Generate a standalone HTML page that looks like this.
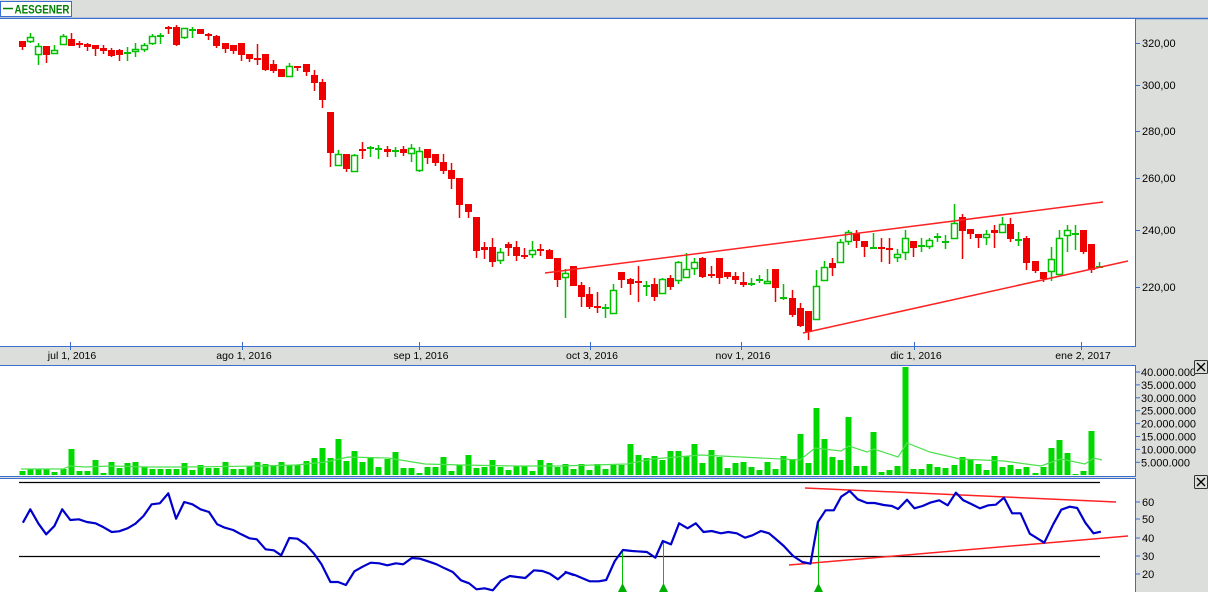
<!DOCTYPE html>
<html><head><meta charset="utf-8"><style>
html,body{margin:0;padding:0;width:1208px;height:592px;overflow:hidden;background:#dcdedc;}
svg{display:block;font-family:"Liberation Sans",sans-serif;}
</style></head><body>
<svg id="s" width="1208" height="592" xmlns="http://www.w3.org/2000/svg">
<rect width="1208" height="592" fill="#dcdedc"/>
<line x1="0" y1="18.5" x2="1208" y2="18.5" stroke="#3a6fd0" stroke-width="1.5"/>
<rect x="0.5" y="1.5" width="71" height="15" fill="#fff" stroke="#3a6fd0"/>
<line x1="3" y1="8.5" x2="13" y2="8.5" stroke="#008000" stroke-width="1.5"/>
<text x="14.5" y="13.5" font-size="12" font-weight="bold" fill="#008000" textLength="55" lengthAdjust="spacingAndGlyphs">AESGENER</text>
<rect x="0" y="19" width="1135" height="327" fill="#fff"/>
<line x1="1135.5" y1="19" x2="1135.5" y2="346" stroke="#3a6fd0"/>
<line x1="0" y1="346.5" x2="1136" y2="346.5" stroke="#3a6fd0"/>
<rect x="0" y="366" width="1135" height="110" fill="#fff"/>
<line x1="0" y1="365.5" x2="1136" y2="365.5" stroke="#3a6fd0"/>
<line x1="1135.5" y1="365" x2="1135.5" y2="477" stroke="#3a6fd0"/>
<line x1="0" y1="476.5" x2="1136" y2="476.5" stroke="#3a6fd0"/>
<rect x="0" y="479" width="1135" height="113" fill="#fff"/>
<line x1="0" y1="478.5" x2="1136" y2="478.5" stroke="#3a6fd0"/>
<line x1="1135.5" y1="478" x2="1135.5" y2="592" stroke="#3a6fd0"/>
<g id="g"></g>
</svg>
<script>
var NS="http://www.w3.org/2000/svg",G=document.getElementById("g");
function el(t,a,txt){var e=document.createElementNS(NS,t);for(var k in a)e.setAttribute(k,a[k]);if(txt)e.textContent=txt;G.appendChild(e);return e;}
function ln(x1,y1,x2,y2,c,w){el("line",{x1:x1,y1:y1,x2:x2,y2:y2,stroke:c,"stroke-width":w||1});}
[[43,"320,00"],[85,"300,00"],[131,"280,00"],[178,"260,00"],[230,"240,00"],[287,"220,00"]].forEach(function(a){ln(1135,a[0]+.5,1140,a[0]+.5,"#3a6fd0");el("text",{x:1142,y:a[0]+4,"font-size":"11"},a[1]);});
[[70,"jul 1, 2016"],[242,"ago 1, 2016"],[419,"sep 1, 2016"],[590,"oct 3, 2016"],[741,"nov 1, 2016"],[914,"dic 1, 2016"],[1081,"ene 2, 2017"]].forEach(function(a){ln(a[0]+.5,342,a[0]+.5,350,"#3a6fd0");el("text",{x:a[0]+2,y:359,"font-size":"10.5","text-anchor":"middle"},a[1]);});
var vl=["40.000.000","35.000.000","30.000.000","25.000.000","20.000.000","15.000.000","10.000.000","5.000.000"];
vl.forEach(function(t,i){var y=372+i*12.9;ln(1135,y,1140,y,"#3a6fd0");el("text",{x:1141,y:y+4,"font-size":"11"},t);});
[[502,"60"],[519,"50"],[538,"40"],[556,"30"],[574,"20"]].forEach(function(a){ln(1135,a[0],1140,a[0],"#3a6fd0");el("text",{x:1142,y:a[0]+4,"font-size":"11"},a[1]);});
[367,482].forEach(function(y){el("rect",{x:1194.5,y:y-6.5,width:13,height:13,fill:"#dcdedc",stroke:"#333",rx:1});ln(1197,y-4,1205,y+4,"#000",1.3);ln(1205,y-4,1197,y+4,"#000",1.3);});
var C=[[41,47,41,50,"r"],[37,42,33,43,"g"],[46,55,43,65,"g"],[46,55,46,63,"r"],[50,54,45,54,"g"],[36,45,34,45,"g"],[39,46,33,46,"r"],[43,45,41,48,"r"],[44,47,43,51,"r"],[45,49,45,56,"r"],[48,51,45,54,"r"],[50,56,48,57,"r"],[50,55,49,61,"r"],[52,54,47,61,"g"],[49,52,43,57,"g"],[45,50,43,52,"g"],[36,44,34,45,"g"],[35,36,33,44,"g"],[27,29,26,34,"r"],[27,45,25,46,"r"],[28,38,28,39,"g"],[29,30,27,38,"g"],[29,34,29,34,"r"],[34,36,33,40,"r"],[36,46,35,48,"r"],[43,49,43,53,"r"],[45,51,45,54,"r"],[43,55,43,61,"r"],[54,59,54,62,"r"],[58,60,44,65,"r"],[54,70,54,71,"r"],[64,71,60,73,"r"],[69,77,69,77,"r"],[66,77,63,77,"g"],[66,67,66,71,"r"],[64,72,64,76,"r"],[75,83,70,91,"r"],[82,100,79,108,"r"],[112,153,112,167,"r"],[154,166,150,166,"g"],[154,169,154,172,"r"],[155,172,154,172,"g"],
[149,151,142,159,"r"],[147,149,146,157,"g"],[148,149,145,159,"g"],[149,152,146,157,"r"],[150,151,147,157,"g"],[149,153,146,156,"r"],[148,154,144,162,"g"],[151,171,147,172,"g"],[149,158,149,164,"r"],[154,163,154,166,"r"],[162,171,154,174,"r"],[170,179,163,189,"r"],[178,205,178,218,"r"],[204,212,204,218,"r"],[217,251,217,258,"r"],[247,250,242,259,"r"],[247,262,238,267,"r"],[252,261,248,264,"g"],[244,248,242,256,"r"],[247,256,241,261,"r"],[255,257,248,259,"r"],[250,255,241,258,"g"],[249,251,244,256,"r"],[250,259,249,259,"r"],[258,280,258,287,"r"],[273,278,269,318,"g"],[266,286,266,286,"r"],[285,297,282,307,"r"],[294,307,287,309,"r"],[306,308,292,313,"r"],[307,308,304,318,"g"],[290,314,284,314,"g"],[272,280,272,288,"r"],[279,284,278,295,"r"],[281,282,266,302,"r"],[285,287,281,296,"g"],[284,297,278,301,"r"],[279,294,278,294,"g"],[278,287,275,290,"r"],[262,281,261,284,"g"],[269,278,253,278,"g"],[262,269,258,275,"g"],
[258,277,257,278,"r"],[274,275,266,278,"r"],[258,278,258,284,"r"],[272,277,272,279,"r"],[276,280,272,284,"r"],[282,285,272,287,"r"],[283,285,278,286,"g"],[279,281,275,283,"g"],[281,284,269,284,"g"],[269,288,269,302,"r"],[297,298,284,300,"g"],[298,315,290,317,"r"],[308,326,303,327,"r"],[311,332,311,340,"r"],[286,320,270,320,"g"],[267,281,261,281,"g"],[263,268,258,276,"r"],[242,263,239,263,"g"],[232,242,230,245,"g"],[233,241,230,248,"r"],[241,247,241,257,"r"],[247,248,233,248,"g"],[247,249,238,262,"r"],[248,250,238,264,"r"],[254,258,249,262,"g"],[238,253,230,260,"g"],[241,248,241,257,"r"],[245,247,238,252,"g"],[240,247,238,249,"g"],[236,238,233,242,"g"],[241,242,235,249,"g"],[223,239,204,239,"g"],[217,231,214,259,"r"],[229,234,229,239,"r"],[234,238,234,248,"r"],[234,238,230,245,"g"],[230,233,225,248,"r"],[224,233,217,233,"g"],[224,239,218,242,"r"],[239,240,232,246,"g"],[238,263,236,270,"r"],[261,271,261,273,"r"],[272,279,272,282,"r"],[259,272,247,281,"g"],[238,275,230,275,"g"],[230,236,225,252,"g"],[233,234,225,250,"g"],[230,252,230,254,"r"],[244,270,244,273,"r"],[266,267,262,267,"g"]];
C.forEach(function(c,i){var x=Math.round(22+i*8.1);var col=c[4]=="r"?"#ee0000":"#00c000";
ln(x+.5,c[2],x+.5,c[3],col,1.5);
if(c[4]=="r"){el("rect",{x:x-3,y:c[0],width:7,height:Math.max(2,c[1]-c[0]),fill:col});}
else{if(c[1]-c[0]<=2){ln(x-3,c[0]+1,x+4,c[0]+1,col,2);}else el("rect",{x:x-2.5,y:c[0]+.5,width:6,height:c[1]-c[0]-1,fill:"#fff",stroke:col,"stroke-width":1.5});}
});
ln(545,273,1103,202,"#f22",1.5);ln(803,333,1128,261,"#f22",1.5);
var V=[471,469,469,469,472,469,449,471,471,460,473,462,468,463,462,467,469,469,469,469,463,470,465,468,468,462,469,469,466,462,464,466,462,465,465,461,458,448,458,439,461,451,462,457,467,459,452,468,468,473,467,467,457,471,465,455,468,467,460,467,470,466,466,471,460,463,467,
464,469,464,470,464,469,464,465,444,455,458,456,460,451,451,456,444,463,450,457,468,463,462,467,470,462,469,456,459,434,463,408,439,457,460,417,466,466,432,472,470,466,367,469,469,464,467,468,465,457,459,464,470,456,467,465,469,467,473,467,448,440,453,474,471,431];
V.forEach(function(t,i){var x=Math.round(22+i*8.1);el("rect",{x:x-2.5,y:t,width:6,height:475-t,fill:"#00d800"});});
el("polyline",{points:"21,469 63,469 70,466 85,467 111,466 148,467 185,467 259,466 296,465 326,462 348,457 388,458 425,464 462,465 518,466 560,466 627,464 652,459 701,455 800,460 815,448 841,451 849,446 867,452 874,449 898,457 907,443 930,452 960,459 1004,461 1041,466 1052,462 1061,459 1085,464 1094,458 1102,460",fill:"none",stroke:"#4ee04e","stroke-width":1.2});
ln(19,482.5,1100,482.5,"#000",1.3);ln(19,556.5,1100,556.5,"#000",1.3);
var R1=[62,140,82,100,104,143,125,175,147,150,168,100,190,132,213,130,235,138,258,142,280,154,302,168,322,166,345,157,366,143,388,120,410,85,432,82,455,52,476,128,498,78,520,85,542,100,565,108,587,145,608,155,630,162,652,175,674,187,694,190,718,220,740,223,760,238,782,186,804,188,826,205,848,232,869,265,893,318,914,318,935,327,958,286,980,272,1002,260,1025,262,1047,268,1070,262,1090,265,1113,246,1135,248,1157,256,1180,265,1202,277,1224,288,1246,313,1268,322,1288,340,1310,337,1332,343,1354,314,1378,300,1398,303,1420,306,1443,283,1466,285,1486,293,1508,310,1530,289,1550,297];
var R2=[15,288,40,297,80,316,105,316,125,312,148,255,170,222,195,225,235,228,258,245,278,195,300,205,322,142,345,157,367,142,388,168,410,165,435,172,455,168,478,172,500,185,520,178,543,165,565,172,580,186,605,210,630,240,655,258,677,263,697,138,718,103,740,103,760,62,783,45,805,70,830,81,850,81,875,87,897,90,914,99,938,71,958,97,980,90,1000,80,1025,73,1048,88,1070,50,1090,73,1113,85,1135,97,1158,88,1178,86,1200,65,1222,112,1245,112,1270,173,1309,200,1333,145,1355,101,1378,92,1398,96,1420,140,1442,172,1462,167];
var p=[];for(var i=0;i<R1.length;i+=2)p.push((R1[i]/2.703).toFixed(1)+","+(476+R1[i+1]/3).toFixed(1));
for(i=0;i<R2.length;i+=2)p.push((560+R2[i]/2.703).toFixed(1)+","+(476+R2[i+1]/3).toFixed(1));
[[622,550],[663,541],[818,522]].forEach(function(a){ln(a[0]+.5,a[1],a[0]+.5,588,"#00c000",1);el("polygon",{points:(a[0]-4)+",592 "+(a[0]+5)+",592 "+(a[0]+.5)+",583",fill:"#00b000"});});
ln(805,488,1116,502,"#f22",1.5);ln(789,565,1128,536,"#f22",1.5);
el("polyline",{points:p.join(" "),fill:"none",stroke:"#0000cc","stroke-width":2.2,"stroke-linejoin":"round"});
</script>
</body></html>
